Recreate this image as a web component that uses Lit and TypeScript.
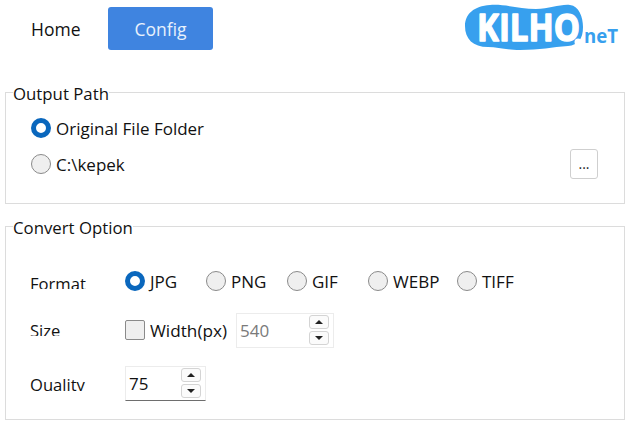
import { LitElement, html, css, svg } from "lit";
import { customElement } from "lit/decorators.js";

const logo = svg`<svg class="logo" width="157" height="50" viewBox="0 0 157 50" aria-hidden="true">
  <path d="M26 2 C42 1 56 6 72 6 C86 6 96 1 106 2 C115 3 119 14 119 24 C119 36 114 42 104 43 C88 44 76 47 56 47 C42 47 34 44 24 44 C9 44 1 36 1 23 C1 11 10 3 26 2 Z" fill="#37a0ee"/>
  <text x="13" y="38" class="kilho" textLength="103" lengthAdjust="spacingAndGlyphs">KILHO</text>
  <circle cx="114" cy="39" r="3.5" fill="#fff"/>
  <text x="120" y="40" class="net" textLength="34" lengthAdjust="spacingAndGlyphs">neT</text>
</svg>`;

const spinner = html`<span class="spin">
  <span class="arrow"><svg width="8" height="4" viewBox="0 0 8 4"><path d="M4 0 8 4H0Z" fill="#222"/></svg></span>
  <span class="arrow"><svg width="8" height="4" viewBox="0 0 8 4"><path d="M0 0H8L4 4Z" fill="#222"/></svg></span>
</span>`;

@customElement("app-root")
export class AppRoot extends LitElement {
  static styles = css`
    :host {
      display: block;
      width: 627px;
      height: 424px;
      overflow: hidden;
      background: #fff;
      color: #111;
      font-family: "Open Sans", "Noto Sans", sans-serif;
      font-size: 17px;
    }
    .top {
      display: flex;
      align-items: flex-start;
      height: 84px;
      padding: 7px 6px 0 31px;
      box-sizing: border-box;
    }
    .tab {
      height: 43px;
      line-height: 45px;
      font-size: 17.5px;
    }
    .home { width: 77px; }
    .config {
      width: 105px;
      box-sizing: border-box;
      text-align: center;
      background: #3f84e0;
      color: #e8f1fc;
      border-radius: 3px;
    }
    .logo { margin-left: auto; margin-top: -4px; flex: none; }
    .kilho {
      font-family: "Open Sans", sans-serif;
      font-weight: 700;
      font-size: 38px;
      fill: #fff;
      stroke: #fff;
      stroke-width: 1.4px;
      stroke-linejoin: round;
    }
    .net {
      font-family: "Open Sans", sans-serif;
      font-weight: 700;
      font-size: 19px;
      fill: #37a0ee;
    }
    fieldset {
      margin: 0 0 0 5px;
      width: 620px;
      box-sizing: border-box;
      padding: 0;
      border: 1px solid #dcdcdc;
      min-width: 0;
    }
    legend {
      padding: 0;
      margin-left: 7px;
      height: 22px;
      line-height: 26px;
      font-size: 16.8px;
    }
    .path { height: 123px; margin-top: -3px; }
    .convert { height: 205px; margin-top: 11px; }
    .path-body { padding: 7px 26px 0 25px; }
    .convert-body { padding: 0 26px 0 24px; }
    .path-row {
      display: flex;
      align-items: center;
      height: 36px;
    }
    .browse {
      margin-left: auto;
      width: 28px;
      height: 30px;
      box-sizing: border-box;
      border: 1px solid #cfcfcf;
      border-radius: 3px;
      background: #fff;
      font: inherit;
      font-size: 14px;
      line-height: 24px;
      padding: 0;
      color: #222;
    }
    .radio {
      display: flex;
      align-items: center;
      gap: 5px;
    }
    .dot {
      width: 20px;
      height: 20px;
      flex: none;
      box-sizing: border-box;
      border-radius: 50%;
      border: 1.5px solid #8a8a8a;
      background: #efefef;
    }
    .on .dot {
      border: 5.5px solid #0a67bd;
      background: #fff;
    }
    .form-row {
      display: grid;
      grid-template-columns: 95px 1fr;
      align-items: center;
      height: 36px;
    }
    .row-format { margin-top: 26px; }
    .row-size { margin-top: 13px; }
    .row-quality { margin-top: 17px; }
    .lbl {
      align-self: start;
      font-size: 16.6px;
      line-height: 22px;
      overflow: hidden;
    }
    .row-format .lbl { margin-top: 10px; height: 16px; }
    .row-size .lbl { margin-top: 8px; height: 16px; }
    .row-quality .lbl { margin-top: 9px; height: 17px; }
    .formats {
      display: grid;
      grid-template-columns: 81px 81px 81px 89px auto;
      justify-content: start;
    }
    .size-ctrl { display: flex; align-items: center; }
    .check {
      width: 20px;
      height: 20px;
      flex: none;
      box-sizing: border-box;
      margin-right: 5px;
      border: 1.5px solid #8a8a8a;
      border-radius: 2px;
      background: #efefef;
    }
    .check-lbl { width: 86px; white-space: nowrap; font-size: 17.2px; }
    .num {
      display: flex;
      align-items: center;
      justify-content: space-between;
      box-sizing: border-box;
      height: 35px;
      padding: 0 4px 0 3px;
      border: 1px solid #ececec;
    }
    .dis { width: 98px; color: #7a7a7a; }
    .qual { width: 81px; border-bottom: 1px solid #6e6e6e; }
    .spin { display: flex; flex-direction: column; gap: 2px; }
    .arrow {
      display: flex;
      align-items: center;
      justify-content: center;
      box-sizing: border-box;
      width: 20px;
      height: 14px;
      border: 1px solid #d4d4d4;
      border-radius: 3px;
      background: #fbfbfb;
    }
  `;

  private radio(text: string, on = false) {
    return html`<div class="radio ${on ? "on" : ""}"><span class="dot"></span><span>${text}</span></div>`;
  }

  render() {
    return html`
      <div class="top">
        <div class="tab home">Home</div>
        <div class="tab config">Config</div>
        ${logo}
      </div>
      <fieldset class="path">
        <legend>Output Path</legend>
        <div class="path-body">
          <div class="path-row">${this.radio("Original File Folder", true)}</div>
          <div class="path-row">
            ${this.radio("C:\\kepek")}
            <button class="browse">...</button>
          </div>
        </div>
      </fieldset>
      <fieldset class="convert">
        <legend>Convert Option</legend>
        <div class="convert-body">
          <div class="form-row row-format">
            <div class="lbl">Format</div>
            <div class="formats">
              ${this.radio("JPG", true)}${this.radio("PNG")}${this.radio("GIF")}${this.radio("WEBP")}${this.radio("TIFF")}
            </div>
          </div>
          <div class="form-row row-size">
            <div class="lbl">Size</div>
            <div class="size-ctrl">
              <span class="check"></span>
              <span class="check-lbl">Width(px)</span>
              <div class="num dis"><span>540</span>${spinner}</div>
            </div>
          </div>
          <div class="form-row row-quality">
            <div class="lbl">Quality</div>
            <div class="num qual"><span>75</span>${spinner}</div>
          </div>
        </div>
      </fieldset>
    `;
  }
}
